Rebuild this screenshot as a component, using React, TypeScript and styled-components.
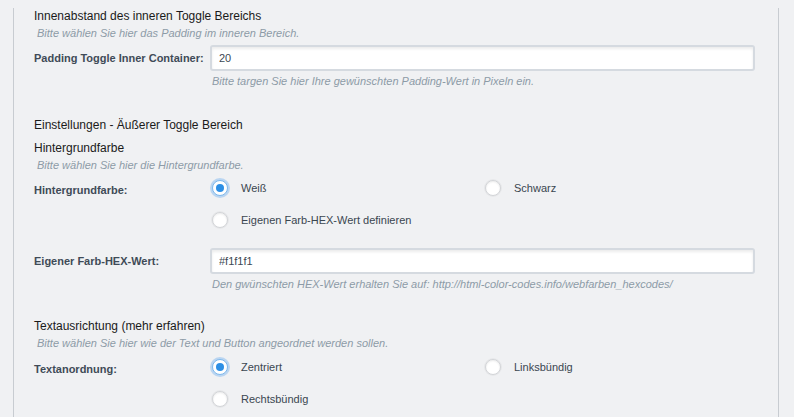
import styled, { createGlobalStyle } from 'styled-components';

const GlobalStyle = createGlobalStyle`
    html, body {
        margin: 0;
        padding: 0;
        background: #f0f1f3;
        font-family: 'Liberation Sans', Arial, sans-serif;
    }
`;

type Option = { label: string; checked?: boolean };

const RadioGroup = ({ options }: { options: Option[] }) => (
    <Options>
        {options.map((opt) => (
            <OptionItem key={opt.label}>
                <Radio $checked={!!opt.checked} />
                <OptionLabel>{opt.label}</OptionLabel>
            </OptionItem>
        ))}
    </Options>
);

const App = () => {
    return (
        <>
            <GlobalStyle />
            <Frame>
                <Panel>
                    <Section $top={8}>
                        <Heading>Innenabstand des inneren Toggle Bereichs</Heading>
                        <Description>Bitte wählen Sie hier das Padding im inneren Bereich.</Description>
                        <Field $top={5}>
                            <Label $lh={26}>Padding Toggle Inner Container:</Label>
                            <Control>
                                <TextInput readOnly value="20" />
                                <Help>Bitte targen Sie hier Ihre gewünschten Padding-Wert in Pixeln ein.</Help>
                            </Control>
                        </Field>
                    </Section>

                    <Section $top={29}>
                        <Heading>Einstellungen - Äußerer Toggle Bereich</Heading>
                    </Section>

                    <Section $top={7}>
                        <Heading>Hintergrundfarbe</Heading>
                        <Description>Bitte wählen Sie hier die Hintergrundfarbe.</Description>
                        <Field $top={0}>
                            <Label $lh={36}>Hintergrundfarbe:</Label>
                            <RadioGroup
                                options={[
                                    { label: 'Weiß', checked: true },
                                    { label: 'Schwarz' },
                                    { label: 'Eigenen Farb-HEX-Wert definieren' }
                                ]}
                            />
                        </Field>
                        <Field $top={12}>
                            <Label $lh={26}>Eigener Farb-HEX-Wert:</Label>
                            <Control>
                                <TextInput readOnly value="#f1f1f1" />
                                <Help>
                                    Den gwünschten HEX-Wert erhalten Sie auf:
                                    http://html-color-codes.info/webfarben_hexcodes/
                                </Help>
                            </Control>
                        </Field>
                    </Section>

                    <Section $top={27}>
                        <Heading>Textausrichtung (mehr erfahren)</Heading>
                        <Description>
                            Bitte wählen Sie hier wie der Text und Button angeordnet werden sollen.
                        </Description>
                        <Field $top={1}>
                            <Label $lh={36}>Textanordnung:</Label>
                            <RadioGroup
                                options={[
                                    { label: 'Zentriert', checked: true },
                                    { label: 'Linksbündig' },
                                    { label: 'Rechtsbündig' }
                                ]}
                            />
                        </Field>
                    </Section>
                </Panel>
            </Frame>
        </>
    );
};

export default App;

const Frame = styled.div`
    width: 794px;
    height: 417px;
    overflow: hidden;
    background: #f0f1f3;
    padding-left: 13px;
    box-sizing: border-box;
`;

const Panel = styled.div`
    width: 766px;
    min-height: 417px;
    box-sizing: border-box;
    border-left: 1px solid #c8ccd1;
    border-right: 1px solid #c8ccd1;
    padding: 0 23px 0 20px;
`;

const Section = styled.section<{ $top: number }>`
    margin-top: ${({ $top }) => $top}px;
`;

const Heading = styled.h3`
    margin: 0;
    font-size: 12px;
    font-weight: normal;
    line-height: 16px;
    color: #1a1a1a;
`;

const Description = styled.p`
    margin: 2px 0 0 3px;
    font-size: 11px;
    font-style: italic;
    line-height: 14px;
    color: #8d9ba7;
`;

const Field = styled.div<{ $top: number }>`
    display: grid;
    grid-template-columns: 176px 1fr;
    margin-top: ${({ $top }) => $top}px;
`;

const Label = styled.label<{ $lh: number }>`
    font-size: 11px;
    font-weight: bold;
    line-height: ${({ $lh }) => $lh}px;
    color: #3f4b57;
`;

const Control = styled.div`
    display: flex;
    flex-direction: column;
`;

const TextInput = styled.input`
    box-sizing: border-box;
    width: 100%;
    height: 26px;
    margin: 0;
    padding: 0 7px;
    border: 2px solid #d5dae0;
    border-radius: 3px;
    background: #fff;
    box-shadow: inset 0 2px 3px rgba(0, 0, 0, 0.08);
    font-family: 'Liberation Sans', Arial, sans-serif;
    font-size: 11px;
    color: #3c4853;
    outline: none;
`;

const Help = styled.p`
    margin: 3px 0 0 2px;
    font-size: 11px;
    font-style: italic;
    line-height: 14px;
    color: #8d9ba7;
`;

const Options = styled.div`
    display: grid;
    grid-template-columns: 273px 1fr;
`;

const OptionItem = styled.div`
    display: flex;
    align-items: center;
    height: 32px;
    padding-left: 2px;
`;

const Radio = styled.span<{ $checked: boolean }>`
    position: relative;
    box-sizing: border-box;
    width: 16px;
    height: 16px;
    flex: none;
    border-radius: 50%;
    background: #fff;
    border: 1px solid ${({ $checked }) => ($checked ? '#7db8ec' : '#d3d5d8')};
    box-shadow: ${({ $checked }) =>
        $checked
            ? '0 0 0 2px rgba(120, 180, 240, 0.45)'
            : '0 0 0 1px rgba(0, 0, 0, 0.04), inset 0 1px 2px rgba(0, 0, 0, 0.08)'};

    ${({ $checked }) =>
        $checked &&
        `&::after {
            content: '';
            position: absolute;
            left: 3px;
            top: 3px;
            width: 8px;
            height: 8px;
            border-radius: 50%;
            background: #2d8fe5;
        }`}
`;

const OptionLabel = styled.span`
    margin-left: 13px;
    font-size: 11px;
    color: #3a4650;
`;
